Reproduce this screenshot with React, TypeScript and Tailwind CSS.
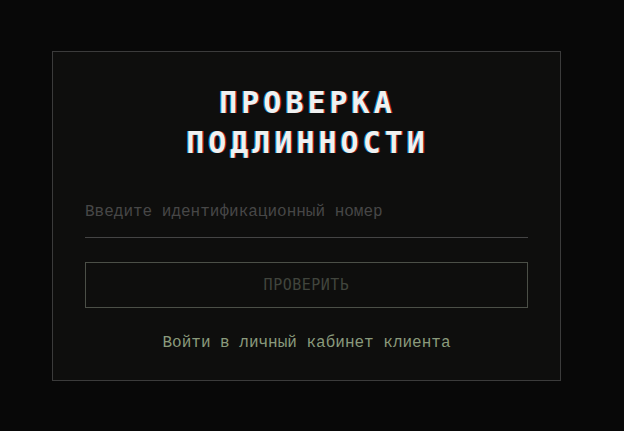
import React from 'react';

export default function App() {
  return (
    <div className="min-h-screen w-full bg-[#080808] pt-[51px] pl-[52px]">
      <div className="w-[509px] border border-[#3b3b3b] bg-[#0e0e0d] px-8 pt-[31px] pb-[25px]">
        {/* Title */}
        <h1 className="text-center font-['DejaVu_Sans_Mono',monospace] text-[30px] leading-[40px] font-bold tracking-[4px] pl-[2px] text-[#f0f0f0] [text-shadow:-1px_0_rgba(0,190,255,0.7),1px_0_rgba(255,40,40,0.7)]">
          ПРОВЕРКА
          <br />
          ПОДЛИННОСТИ
        </h1>

        {/* Input */}
        <div className="mt-[37px]">
          <input
            type="text"
            placeholder="Введите идентификационный номер"
            className="block w-full h-[38px] bg-transparent border-0 border-b border-[#444] pb-[13px] font-['Liberation_Mono',monospace] text-[16px] leading-[24px] text-[#aaa] placeholder:text-[#474747] outline-none"
          />
        </div>

        {/* Button */}
        <button className="block mt-[24px] w-full h-[46px] border border-[#4b4f47] bg-transparent font-['DejaVu_Sans_Mono',monospace] text-[15px] tracking-[0.5px] text-[#41453d]">
          ПРОВЕРИТЬ
        </button>

        {/* Link */}
        <div className="mt-[21px] text-center leading-[24px]">
          <a className="font-['Liberation_Mono',monospace] text-[16px] text-[#8a9a7c] cursor-pointer">
            Войти в личный кабинет клиента
          </a>
        </div>
      </div>
    </div>
  );
}
